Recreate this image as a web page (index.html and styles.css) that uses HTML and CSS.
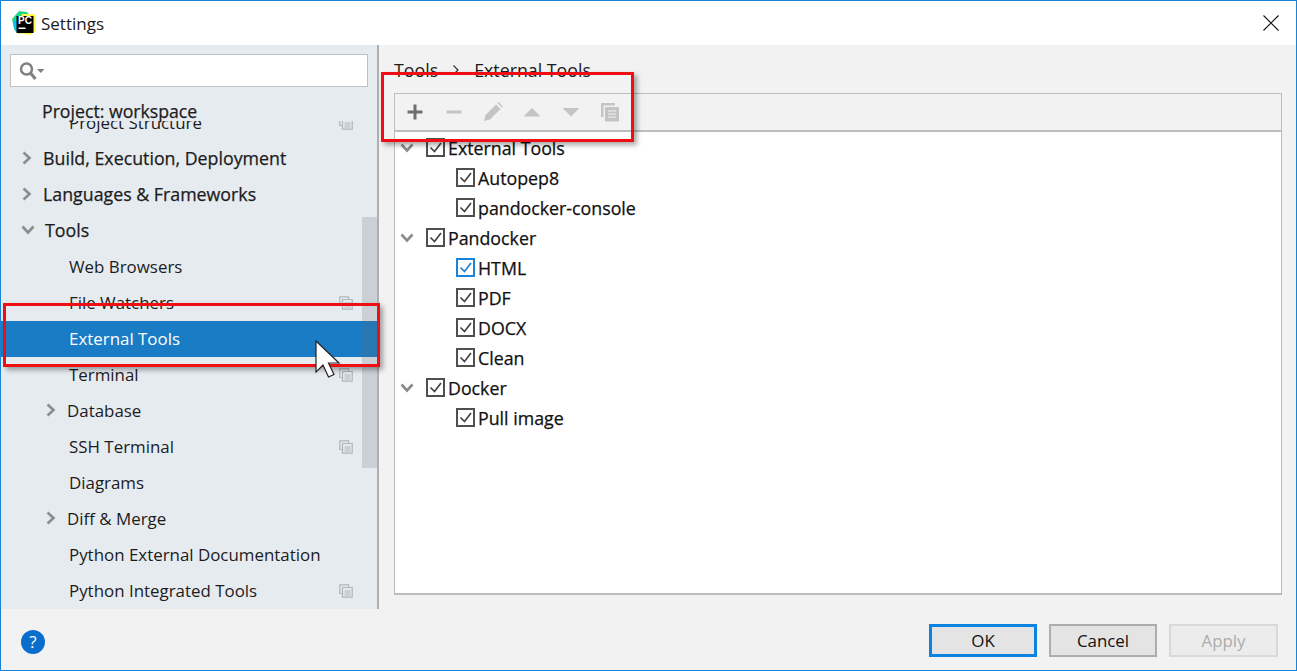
FILE: index.html
```html
<!DOCTYPE html>
<html lang="en">
<head>
    <meta charset="UTF-8">
    <title>Settings</title>
    <link rel="stylesheet" href="styles.css">
</head>
<body>
<svg class="sprites" width="0" height="0">
    <symbol id="chev-r" viewBox="0 0 12 14"><path d="M2.500 1.500 8.500 7l-6 5.500" fill="none" stroke="#8c8c8c" stroke-width="2.600"/></symbol>
    <symbol id="chev-d" viewBox="0 0 14 12"><path d="M1.500 2.500 7 8.500l5.500-6" fill="none" stroke="#8c8c8c" stroke-width="2.600"/></symbol>
    <symbol id="copy" viewBox="0 0 14 14"><g fill="none" stroke="#aeb6bc" stroke-width="1.200"><path d="M9.500 3V.8H.8v8.700H3"/><path d="M3.500 3.500h9.700v9.700H3.500z" fill="#e6ebf0"/><path d="M5.500 7h6M5.500 9h6M5.500 11h6"/></g></symbol>
    <symbol id="check" viewBox="0 0 15 15"><path d="M2.500 7.500 6.500 11.500 13 3" fill="none" stroke="currentColor" stroke-width="1.700"/></symbol>
</svg>

<div class="window">
    <header class="titlebar">
        <svg class="logo" width="24" height="24" viewBox="0 0 24 24">
            <path d="M0 8 7 0 15 1 20 8 8 23 2 18z" fill="#21d789"/>
            <path d="M10 3 23 3 24 20 18 24 5 22z" fill="#fcf84a"/>
            <path d="M1 11 4 8 8 22 3 20z" fill="#07c3f2"/>
            <rect x="4.500" y="5" width="17" height="17" fill="#000"/>
            <text x="6" y="13" class="logo-text">PC</text>
            <rect x="6.500" y="16.500" width="7" height="1.500" fill="#fff"/>
        </svg>
        <span class="title">Settings</span>
        <svg class="close" width="16" height="16" viewBox="0 0 16 16"><path d="M.5.5l15 15M15.500.5l-15 15" stroke="#111" stroke-width="1.100"/></svg>
    </header>

    <div class="main">
        <aside class="sidebar">
            <div class="search">
                <svg width="30" height="22" viewBox="0 0 30 22">
                    <circle cx="7.500" cy="9" r="5.500" fill="none" stroke="#808080" stroke-width="2.500"/>
                    <path d="M11.500 13 16.500 19" stroke="#808080" stroke-width="3"/>
                    <path d="M18 9h7.500l-3.750 4z" fill="#808080"/>
                </svg>
            </div>
            <div class="nav">
                <div class="nav-group">Project: workspace</div>
                <div class="nav-row sub first">Project Structure<svg class="copy"><use href="#copy"/></svg></div>
                <div class="nav-row top"><svg class="arrow"><use href="#chev-r"/></svg>Build, Execution, Deployment</div>
                <div class="nav-row top"><svg class="arrow"><use href="#chev-r"/></svg>Languages &amp; Frameworks</div>
                <div class="nav-row top open"><svg class="arrow-d"><use href="#chev-d"/></svg>Tools</div>
                <div class="nav-row sub">Web Browsers</div>
                <div class="nav-row sub">File Watchers<svg class="copy"><use href="#copy"/></svg></div>
                <div class="nav-row sub selected">External Tools</div>
                <div class="nav-row sub">Terminal<svg class="copy"><use href="#copy"/></svg></div>
                <div class="nav-row sub-arrow"><svg class="arrow"><use href="#chev-r"/></svg>Database</div>
                <div class="nav-row sub">SSH Terminal<svg class="copy"><use href="#copy"/></svg></div>
                <div class="nav-row sub">Diagrams</div>
                <div class="nav-row sub-arrow"><svg class="arrow"><use href="#chev-r"/></svg>Diff &amp; Merge</div>
                <div class="nav-row sub">Python External Documentation</div>
                <div class="nav-row sub">Python Integrated Tools<svg class="copy"><use href="#copy"/></svg></div>
            </div>
            <div class="scrollbar"></div>
        </aside>

        <section class="content">
            <div class="crumbs">
                <span>Tools</span>
                <svg width="8" height="12" viewBox="0 0 8 12"><path d="M1.500 1.500 6 6l-4.500 4.500" fill="none" stroke="#333" stroke-width="1.200"/></svg>
                <span>External Tools</span>
            </div>
            <div class="panel">
                <div class="toolbar">
                    <svg class="tool" viewBox="0 0 20 20"><path d="M10 2.500v15M2.500 10h15" stroke="#6e6e6e" stroke-width="3"/></svg>
                    <svg class="tool" viewBox="0 0 20 20"><path d="M2.500 10h15" stroke="#c4c4c4" stroke-width="3"/></svg>
                    <svg class="tool" viewBox="0 0 20 20"><path d="M1 19l1.500-6L13 2.500l4.500 4.500L7 17.500z M14.500 1l1-1 4.500 4.500-1 1z" fill="#c4c4c4"/></svg>
                    <svg class="tool" viewBox="0 0 20 20"><path d="M1.500 14.500 10 6l8.500 8.500z" fill="#c4c4c4"/></svg>
                    <svg class="tool" viewBox="0 0 20 20"><path d="M1.500 6h17L10 14.500z" fill="#c4c4c4"/></svg>
                    <svg class="tool" viewBox="0 0 20 20"><path d="M1 1h14v2.500H3.500V15H1z" fill="#c4c4c4"/><path d="M5 5h14v14.500H5z" fill="#c4c4c4"/><path d="M8 9h8M8 12h8M8 15h8" stroke="#f2f2f2" stroke-width="1.200"/></svg>
                </div>
                <div class="tree">
                    <div class="tree-row parent"><svg class="tree-arrow"><use href="#chev-d"/></svg><span class="check"><svg><use href="#check"/></svg></span>External Tools</div>
                    <div class="tree-row child"><span class="check"><svg><use href="#check"/></svg></span>Autopep8</div>
                    <div class="tree-row child"><span class="check"><svg><use href="#check"/></svg></span>pandocker-console</div>
                    <div class="tree-row parent"><svg class="tree-arrow"><use href="#chev-d"/></svg><span class="check"><svg><use href="#check"/></svg></span>Pandocker</div>
                    <div class="tree-row child"><span class="check focus"><svg><use href="#check"/></svg></span>HTML</div>
                    <div class="tree-row child"><span class="check"><svg><use href="#check"/></svg></span>PDF</div>
                    <div class="tree-row child"><span class="check"><svg><use href="#check"/></svg></span>DOCX</div>
                    <div class="tree-row child"><span class="check"><svg><use href="#check"/></svg></span>Clean</div>
                    <div class="tree-row parent"><svg class="tree-arrow"><use href="#chev-d"/></svg><span class="check"><svg><use href="#check"/></svg></span>Docker</div>
                    <div class="tree-row child"><span class="check"><svg><use href="#check"/></svg></span>Pull image</div>
                </div>
            </div>
        </section>
    </div>

    <footer class="footer">
        <div class="help">?</div>
        <div class="buttons">
            <button class="btn default">OK</button>
            <button class="btn">Cancel</button>
            <button class="btn disabled">Apply</button>
        </div>
    </footer>

    <!-- annotations drawn on top of the screenshot -->
    <div class="mark mark-toolbar"></div>
    <div class="mark mark-row"></div>
    <svg class="cursor" width="26" height="38" viewBox="0 0 26 38">
        <path d="M1 1V32L8 25 13.500 37 19 34.500 13.500 23H24z" fill="#fff" stroke="#222" stroke-width="1.200"/>
    </svg>
</div>
</body>
</html>
```

FILE: styles.css
```css
* {
    margin: 0;
    padding: 0;
    box-sizing: border-box;
}
body {
    width: 1297px;
    height: 671px;
    overflow: hidden;
    font-family: "Open Sans", "Noto Sans", sans-serif;
    font-size: 16.900px;
    color: #1c1c1c;
}
.sprites {
    position: absolute;
}
.window {
    position: relative;
    display: flex;
    flex-direction: column;
    width: 1297px;
    height: 671px;
    border: 1px solid #1883d7;
    background: #f2f2f2;
}

/* title bar */
.titlebar {
    display: flex;
    align-items: center;
    flex: none;
    height: 44px;
    padding: 0 17px 0 11px;
    background: #fff;
}
.logo {
    margin-right: 5px;
}
.logo-text {
    font-family: "Liberation Sans", sans-serif;
    font-size: 10px;
    font-weight: 700;
    fill: #fff;
}
.title {
    font-size: 17px;
}
.close {
    margin-left: auto;
}

/* main */
.main {
    display: flex;
    flex: none;
    height: 564px;
}
.sidebar {
    position: relative;
    flex: none;
    width: 378px;
    padding-top: 9px;
    background: #e6ebf0;
    border-right: 2px solid #acb0b3;
}
.search {
    display: flex;
    align-items: center;
    height: 33px;
    margin: 0 9px;
    padding-left: 8px;
    background: #fff;
    border: 1px solid #bdc1c4;
}
.nav {
    height: 522px;
    margin-top: 6px;
    overflow: hidden;
}
.nav-group {
    position: relative;
    z-index: 1;
    height: 28px;
    padding: 6px 0 0 41px;
    line-height: 24px;
    font-weight: 500;
    font-size: 17.700px;
    -webkit-text-stroke: 0.25px;
    background: #e6ebf0;
}
.nav-row {
    position: relative;
    display: flex;
    align-items: center;
    height: 36px;
    padding-bottom: 2px;
    white-space: nowrap;
}
.nav-row.first {
    margin-top: -16px;
}
.nav-row.top {
    padding-left: 42px;
    font-weight: 500;
    font-size: 17.800px;
    -webkit-text-stroke: 0.25px;
}
.nav-row.sub {
    padding-left: 68px;
}
.nav-row.sub-arrow {
    padding-left: 66px;
}
.nav-row.selected {
    background: #1a7cc4;
    color: #fff;
}
.arrow,
.arrow-d {
    position: absolute;
}
.arrow {
    width: 12px;
    height: 14px;
    left: 20px;
    top: 10px;
}
.arrow-d {
    width: 14px;
    height: 12px;
    left: 20px;
    top: 11px;
}
.nav-row.sub-arrow .arrow {
    left: 44px;
}
.nav-row.open {
    padding-left: 44px;
}
.copy {
    position: absolute;
    left: 338px;
    top: 11px;
    width: 14px;
    height: 14px;
}
.scrollbar {
    position: absolute;
    right: 0;
    top: 172px;
    width: 15px;
    height: 251px;
    background: rgba(90, 100, 110, 0.2);
}

/* right panel */
.content {
    flex: 1;
    padding: 0 14px 14px 15px;
}
.crumbs {
    display: flex;
    align-items: center;
    gap: 14px;
    height: 48px;
    padding-top: 2px;
    font-weight: 500;
    font-size: 17.800px;
}
.panel {
    display: flex;
    flex-direction: column;
    height: 502px;
    background: #fff;
    border: 1px solid #bdbdbd;
    border-bottom-width: 2px;
}
.toolbar {
    display: flex;
    align-items: center;
    gap: 19px;
    flex: none;
    height: 38px;
    padding-left: 10px;
    background: #f2f2f2;
    border-bottom: 2px solid #bdbdbd;
}
.tool {
    width: 20px;
    height: 20px;
}
.tree {
    padding-top: 2px;
}
.tree-row {
    position: relative;
    display: flex;
    align-items: center;
    gap: 3px;
    height: 30px;
    padding-bottom: 2px;
    font-weight: 500;
    font-size: 17.800px;
    -webkit-text-stroke: 0.25px;
    color: #111;
    line-height: 28px;
}
.tree-row.parent {
    padding-left: 31px;
}
.tree-row.child {
    padding-left: 61px;
}
.tree-arrow {
    position: absolute;
    left: 5px;
    top: 8px;
    width: 14px;
    height: 12px;
}
.check {
    flex: none;
    display: block;
    width: 19px;
    height: 19px;
    margin-top: -1px;
    color: #444;
    background: #fff;
    border: 2px solid #4f4f4f;
}
.check svg {
    display: block;
    width: 15px;
    height: 15px;
}
.check.focus {
    color: #1883d7;
    border-color: #1883d7;
}

/* footer */
.footer {
    display: flex;
    align-items: flex-start;
    justify-content: space-between;
    flex: 1;
    padding: 15px 18px 0 20px;
}
.help {
    width: 24px;
    height: 24px;
    margin-top: 6px;
    border-radius: 50%;
    background: #0a6fcc;
    color: #fff;
    text-align: center;
    line-height: 24px;
    font-size: 17px;
}
.buttons {
    display: flex;
    gap: 12px;
}
.btn {
    width: 108px;
    height: 33px;
    background: #e4e4e4;
    border: 2px solid #adadad;
    font: inherit;
    color: #111;
}
.btn.default {
    border: 3px solid #0a84e0;
}
.btn.disabled {
    width: 109px;
    color: #adadad;
    background: #ececec;
    border-color: #d9d9d9;
}

/* annotations */
.mark {
    position: absolute;
    border: 3px solid #ee0f14;
    box-shadow: 3px 3px 5px rgba(0, 0, 0, 0.35);
}
.mark-toolbar {
    left: 380px;
    top: 71px;
    width: 253px;
    height: 70px;
}
.mark-row {
    left: 2px;
    top: 302px;
    width: 377px;
    height: 64px;
}
.cursor {
    position: absolute;
    left: 314px;
    top: 339px;
}
```
